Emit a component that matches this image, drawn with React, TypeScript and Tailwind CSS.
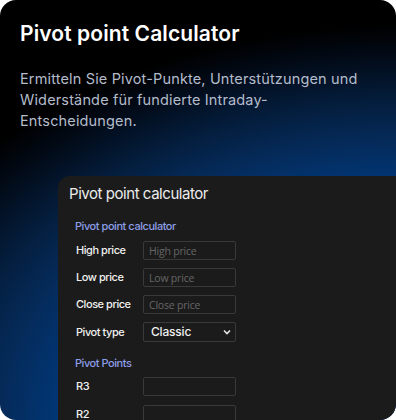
const inputCls =
  "w-[93px] h-[19px] bg-[#1b1b1b] border border-[#3a3a3a] rounded-[2px] px-[5px] text-[10.5px] tracking-[-0.2px] text-[#d4d4d4] placeholder:text-[#666] outline-none";

const labelCls = "w-[67px] shrink-0 whitespace-nowrap text-[11px] font-medium tracking-[-0.45px] text-[#f0f0f0]";

function Row({ label, placeholder }: { label: string; placeholder?: string }) {
  return (
    <div className="flex items-center h-[19px] pl-[18px]">
      <label className={labelCls}>{label}</label>
      <input className={inputCls} placeholder={placeholder} style={{ fontFamily: "'Open Sans', sans-serif" }} />
    </div>
  );
}

export default function App() {
  return (
    <div className="w-[396px] h-[420px] bg-white">
      <div className="relative w-full h-full rounded-2xl overflow-hidden bg-[radial-gradient(ellipse_600px_420px_at_400px_420px,#0044a0_0%,#00387a_55%,#052a58_67%,#041d3c_76%,#020a16_87%,#000_94%)] font-['Inter',sans-serif]">
        <div className="px-5 pt-[21px]">
          <h1 className="text-[21px] font-semibold text-white leading-[26px] tracking-[0.1px]">Pivot point Calculator</h1>
          <p className="mt-[21px] text-[14.5px] leading-[21px] tracking-[0.15px] text-[#b4bccb]">
            Ermitteln Sie Pivot-Punkte, Unterstützungen und Widerstände für fundierte Intraday-Entscheidungen.
          </p>
        </div>
        <div className="ml-[58px] mt-[45px] h-[260px] bg-[#1b1b1b] rounded-tl-xl pt-[8px]">
          <div className="pl-[11px] text-[15px] tracking-[-0.45px] text-[#ececec] leading-[20px]">Pivot point calculator</div>
          <div className="pl-[17px] mt-[15px] text-[11px] font-medium tracking-[-0.45px] text-[#8d9ee6] leading-[14px]">Pivot point calculator</div>
          <div className="mt-[8px] flex flex-col gap-[8px]">
            <Row label="High price" placeholder="High price" />
            <Row label="Low price" placeholder="Low price" />
            <Row label="Close price" placeholder="Close price" />
            <div className="flex items-center h-[20px] pl-[18px]">
              <label className={labelCls}>Pivot type</label>
              <div className="w-[93px] h-[20px] border border-[#3a3a3a] rounded-[2px] flex items-center justify-between pl-[7px] pr-[4px]">
                <span className="text-[12px] font-medium tracking-[-0.2px] text-[#f0f0f0]">Classic</span>
                <svg width="8" height="6" viewBox="0 0 8 6" fill="none">
                  <path d="M1 1.5 L4 4.5 L7 1.5" stroke="#e5e5e5" strokeWidth="1.6" />
                </svg>
              </div>
            </div>
          </div>
          <div className="pl-[17px] mt-[14px] text-[11px] font-medium tracking-[-0.45px] text-[#8d9ee6] leading-[14px]">Pivot Points</div>
          <div className="mt-[7px] flex flex-col gap-[9px]">
            <Row label="R3" />
            <Row label="R2" />
          </div>
        </div>
      </div>
    </div>
  );
}
